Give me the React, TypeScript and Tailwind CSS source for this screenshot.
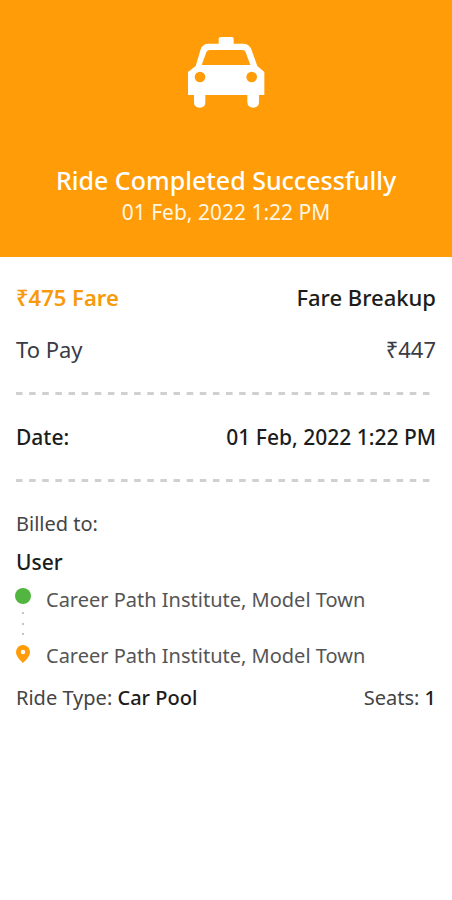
import type { ReactNode } from 'react'

const ride = {
  fare: '₹475',
  toPay: '₹447',
  completedAt: '01 Feb, 2022 1:22 PM',
  billedTo: 'User',
  pickup: 'Career Path Institute, Model Town',
  drop: 'Career Path Institute, Model Town',
  rideType: 'Car Pool',
  seats: 1,
}

function TaxiIcon() {
  return (
    <svg viewBox="50 50 234 216" className="h-18 w-20" aria-hidden="true">
      <path
        fill="#fff"
        fillRule="evenodd"
        d="M151 53h34q5 0 5 5v15h28q19 0 25 17l18 50 21 18v69h-16v22q0 16-17 16t-18-16v-22H105v22q0 16-17 16t-17-16v-22H53v-69l23-18 15-50q5-17 24-17h30V58q0-5 6-5ZM118 92q-7 0-10 7L94 137h146l-14-38q-3-7-9-7Z"
      />
      <circle cx="89" cy="173" r="16" fill="#ff9c07" />
      <circle cx="244" cy="173" r="16" fill="#ff9c07" />
    </svg>
  )
}

function PinIcon() {
  return (
    <svg viewBox="0 0 14 18" className="h-[18px] w-[14px]" aria-hidden="true">
      <path
        fill="#ff9c07"
        fillRule="evenodd"
        d="M7 0a7 7 0 0 0-7 7c0 4.600 4.500 8.500 7 11 2.500-2.500 7-6.400 7-11a7 7 0 0 0-7-7Zm0 4.800a2.200 2.200 0 1 1 0 4.400 2.200 2.200 0 0 1 0-4.400Z"
      />
    </svg>
  )
}

function Divider() {
  return (
    <hr className="h-[3px] border-0 bg-[linear-gradient(to_right,#d0d0d0_50%,transparent_50%)] bg-[length:13px_3px] bg-repeat-round" />
  )
}

function Row({ children }: { children: ReactNode }) {
  return <div className="flex items-center justify-between leading-7">{children}</div>
}

function App() {
  return (
    <main className="min-h-screen bg-white font-['Noto_Sans',sans-serif] text-[#1c1c1c]">
      <header className="flex flex-col items-center bg-[#ff9c07] pt-9 pb-[29px] text-white">
        <TaxiIcon />
        <h1 className="mt-14 text-[25px] leading-8 font-medium">Ride Completed Successfully</h1>
        <p className="text-[21px] leading-8 text-[#fff6e2]">{ride.completedAt}</p>
      </header>

      <section className="flex flex-col px-4 pt-[26px] pb-8">
        <Row>
          <p className="text-[22px] font-semibold text-[#f79a0c]">{ride.fare} Fare</p>
          <button type="button" className="text-[22px] font-medium">
            Fare Breakup
          </button>
        </Row>
        <div className="mt-6 mb-[29px] text-[22px] text-[#3b3b45]">
          <Row>
            <span>To Pay</span>
            <span>{ride.toPay}</span>
          </Row>
        </div>

        <Divider />
        <div className="my-7 text-[21px] font-medium">
          <Row>
            <span>Date:</span>
            <time>{ride.completedAt}</time>
          </Row>
        </div>
        <Divider />

        <p className="mt-7 text-xl leading-7 text-[#444]">Billed to:</p>
        <p className="mt-2 text-[21px] leading-8 font-medium">{ride.billedTo}</p>

        <div className="mt-2 flex gap-4 text-xl leading-7 text-[#555]">
          <div className="flex w-[14px] flex-col items-center pt-0.5 pb-[7px]">
            <span className="size-4 shrink-0 rounded-full bg-[#51b53f]" />
            <span className="mt-2 mb-2.5 flex flex-1 flex-col justify-between">
              <i className="size-[2px] bg-[#c4c4c4]" />
              <i className="size-[2px] bg-[#c4c4c4]" />
              <i className="size-[2px] bg-[#c4c4c4]" />
            </span>
            <PinIcon />
          </div>
          <div className="flex flex-col gap-7">
            <p>{ride.pickup}</p>
            <p>{ride.drop}</p>
          </div>
        </div>

        <div className="mt-3.5 text-xl text-[#444]">
          <Row>
            <span>
              Ride Type: <b className="font-medium text-[#1c1c1c]">{ride.rideType}</b>
            </span>
            <span>
              Seats: <b className="font-medium text-[#1c1c1c]">{ride.seats}</b>
            </span>
          </Row>
        </div>
      </section>
    </main>
  )
}

export default App
